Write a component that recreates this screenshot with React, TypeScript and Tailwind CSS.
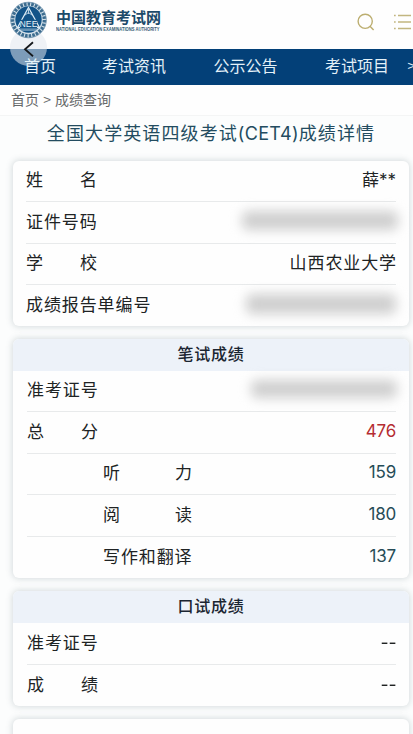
import type { ReactNode } from "react";

const NAV = ["考试资讯", "公示公告", "考试项目"];

function Logo() {
    return (
        <svg className="relative z-20" width="39" height="38" viewBox="0 0 38 38" fill="none">
            <circle cx="19" cy="19" r="18" fill="#d3e0e9" />
            <circle cx="19" cy="19" r="16" stroke="#3c6c8f" strokeWidth="3.6" strokeDasharray="2.6 1.1" />
            <circle cx="19" cy="19" r="17.8" stroke="#7396ae" strokeWidth="0.8" />
            <circle cx="19" cy="18.5" r="13.2" fill="#135488" />
            <path d="M19 6.5 8 26.5h22L19 6.5Z" stroke="#dcebf4" strokeWidth="1.3" />
            <path d="M19 7v6M14.8 14.5l4.2-3 4.2 3M10 29h18" stroke="#c4dae8" strokeWidth="0.9" />
            <rect x="10.5" y="18.8" width="17" height="8.2" fill="#135488" />
            <text x="19" y="26.4" textAnchor="middle" fontSize="9.4" textLength="18" lengthAdjust="spacingAndGlyphs" fill="#e4f0f6" fontFamily="Liberation Sans, sans-serif">NEE</text>
        </svg>
    );
}

function Label({ text, className = "w-[71px]" }: { text: string; className?: string }) {
    if (text.length > 2) {
        return <span className="tracking-[0.9px]">{text}</span>;
    }
    return (
        <span className={`flex justify-between ${className}`}>
            <span>{text[0]}</span>
            <span>{text[1]}</span>
        </span>
    );
}

function Row({ label, children, sub, last }: { label: string; children: ReactNode; sub?: boolean; last?: boolean }) {
    return (
        <div className={`flex h-[41.5px] items-center justify-between pb-[3.5px] ${last ? "" : "border-b border-[#e8eaeb]"} ${sub ? "pl-[76px]" : ""}`}>
            <Label text={label} className={sub ? "w-[89px]" : "w-[71px]"} />
            {children}
        </div>
    );
}

function Card({ title, children }: { title?: string; children: ReactNode }) {
    return (
        <section className="rounded-[6px] bg-[#fefefe] shadow-[0_0_6px_1px_rgba(80,105,115,0.22)]">
            {title && (
                <h2 className="h-[32px] rounded-t-[6px] bg-[#edf2f9] text-center text-[16px] leading-[28px] tracking-[0.7px] font-medium text-[#1b2531]">{title}</h2>
            )}
            <div className="pr-[13px] pl-[14px]">{children}</div>
        </section>
    );
}

function Score({ value, red }: { value: string; red?: boolean }) {
    return <span className={`font-['Inter','Noto_Sans_CJK_SC',sans-serif] text-[17px] tracking-[-0.2px] ${red ? "text-[#b52d32]" : "text-[#264c57]"}`}>{value}</span>;
}

function Masked({ className }: { className: string }) {
    return <span className={`rounded-md bg-[#cfcfcf] blur-[6px] ${className}`}></span>;
}

function Empty() {
    return <span className="-mr-[1px] scale-x-125 origin-right pb-[1px] font-medium tracking-[0.3px]">--</span>;
}

function App() {
    return (
        <div className="h-[734px] w-[413px] overflow-hidden bg-[#fcfdfd] font-['Noto_Sans_CJK_SC',sans-serif] text-[17px] leading-[24px] text-[#202324]">
            <header className="relative flex h-[49px] items-start bg-[#fefefe] pt-[1px] pl-[9px]">
                <Logo />
                <div className="mt-[7px] ml-[8px] w-[106px] text-[#1c4a6a]">
                    <div className="text-[15px] leading-[18px] font-bold whitespace-nowrap">中国教育考试网</div>
                    <svg className="block" width="106" height="8" viewBox="0 0 106 8">
                        <text x="0" y="4.9" textLength="103.5" lengthAdjust="spacingAndGlyphs" fontSize="4.8" fontWeight="bold" fill="#345a73" fontFamily="Liberation Sans, sans-serif">NATIONAL EDUCATION EXAMINATIONS AUTHORITY</text>
                    </svg>
                </div>
                <svg className="mt-[12px] ml-[195px] shrink-0" width="18" height="18" viewBox="0 0 18 18" fill="none" stroke="#bcae70" strokeWidth="1.4">
                    <circle cx="8.2" cy="8.3" r="7.1" />
                    <path d="m13 13.3 3.6 3.8" />
                </svg>
                <svg className="mt-[12px] ml-[18px] shrink-0" width="19" height="18" viewBox="0 0 19 18" fill="none" stroke="#c2b680" strokeWidth="1.3">
                    <path d="M5 2.5h13M5 9h13M5 15.5h13" />
                    <path d="M1 2.5h1.7M1 9h1.7M1 15.5h1.7" />
                </svg>
                {/* floating back button */}
                <div className="absolute top-[29px] left-[10px] z-10 h-[37px] w-[37px] rounded-full bg-[#e2e8ee]/55">
                    <svg className="absolute top-[12px] left-[13px]" width="12" height="17" viewBox="0 0 12 17" fill="none" stroke="#16191c" strokeWidth="1.8">
                        <path d="M10 1.2 2 8.2l8 7" />
                    </svg>
                </div>
            </header>
            <nav className="flex h-[36px] items-center bg-[#034078] pb-[4px] pl-[24px] text-[16px] whitespace-nowrap text-[#e3f1f8]">
                <span className="relative z-20 mr-[46px]">首页</span>
                {NAV.map((item) => (
                    <span key={item} className="mr-[47px] w-[64.5px] shrink-0">{item}</span>
                ))}
                <span className="-ml-[29px] w-[6px] text-[14px]">&gt;</span>
            </nav>
            <div className="h-[31px] border-b border-[#f4f5f5] bg-[#fefefe] pt-[2px] pl-[11px] text-[14px] text-[#66696a]">
                首页 <span className="mx-px">&gt;</span> 成绩查询
            </div>
            <h1 className="h-[44.5px] pt-[3px] pl-[9px] text-center text-[18px] leading-[26px] tracking-[1.1px] whitespace-nowrap text-[#234c60]">全国大学英语四级考试<span className="font-['Inter',sans-serif] text-[18px] tracking-[0.3px]">(CET4)</span>成绩详情</h1>
            <main className="flex flex-col gap-[13px] pr-[4px] pl-[13px]">
                <Card>
                    <div className="-ml-[1px] -mb-px">
                        <Row label="姓名"><span>薛<span className="font-['Inter',sans-serif]">**</span></span></Row>
                        <Row label="证件号码"><Masked className="-mr-[2px] h-[19px] w-[156px]" /></Row>
                        <Row label="学校"><span className="tracking-[0.9px] -mr-[1px]">山西农业大学</span></Row>
                        <Row label="成绩报告单编号" last><Masked className="h-[20px] w-[150px]" /></Row>
                    </div>
                </Card>
                <Card title="笔试成绩">
                    <Row label="准考证号"><Masked className="-mr-[1px] h-[18px] w-[146px]" /></Row>
                    <Row label="总分"><Score value="476" red /></Row>
                    <Row label="听力" sub><Score value="159" /></Row>
                    <Row label="阅读" sub><Score value="180" /></Row>
                    <Row label="写作和翻译" sub last><Score value="137" /></Row>
                </Card>
                <Card title="口试成绩">
                    <Row label="准考证号"><Empty /></Row>
                    <Row label="成绩" last><Empty /></Row>
                </Card>
                <Card>
                    <div className="h-[40px]"></div>
                </Card>
            </main>
        </div>
    );
}
export default App;
